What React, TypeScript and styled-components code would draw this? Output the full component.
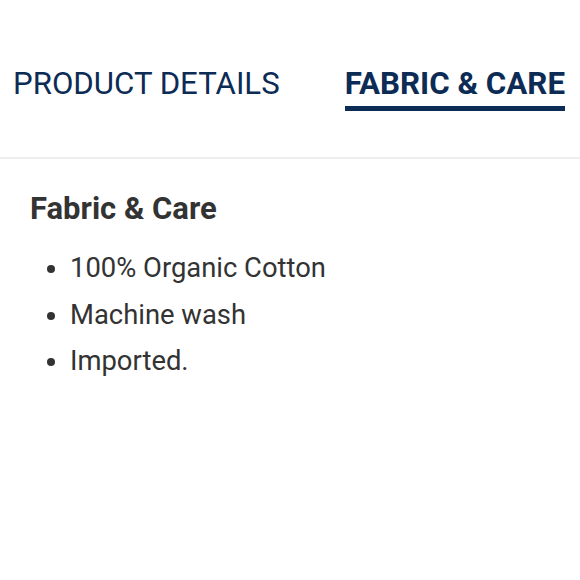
import React, { useState } from 'react'
import styled, { createGlobalStyle } from 'styled-components'

const GlobalStyle = createGlobalStyle`
  html, body {
    margin: 0;
    padding: 0;
    background: #fff;
    font-family: Roboto, "Liberation Sans", sans-serif;
  }
`

const Page = styled.div`
  width: 580px;
  overflow: hidden;
`

const TabBar = styled.div`
  display: flex;
  align-items: flex-start;
  gap: 65px;
  padding: 66px 0 0 13px;
  height: 159px;
  box-sizing: border-box;
  border-bottom: 2px solid #eeeeee;
`

const Tab = styled.button<{ $active?: boolean }>`
  padding: 0 0 4px;
  margin: 0;
  background: none;
  border: none;
  border-bottom: 5px solid ${p => (p.$active ? '#0c2b55' : 'transparent')};
  color: #0c2b55;
  font-family: inherit;
  font-size: ${p => (p.$active ? '31.3px' : '31.2px')};
  font-weight: ${p => (p.$active ? 700 : 400)};
  line-height: 36px;
  white-space: nowrap;
  cursor: pointer;
`

const Panel = styled.div`
  padding: 32px 30px 30px;
`

const Heading = styled.h2`
  margin: 0 0 18px;
  color: #333;
  font-size: 31px;
  font-weight: 700;
  line-height: 36px;
`

const List = styled.ul`
  margin: 0;
  padding-left: 40px;
  color: #333;
  font-size: 27.4px;
  line-height: 46.5px;
`

const tabs = ['PRODUCT DETAILS', 'FABRIC & CARE']

export default function App() {
  const [active, setActive] = useState(1)

  return (
    <Page>
      <GlobalStyle />
      <TabBar>
        {tabs.map((t, i) => (
          <Tab key={t} $active={i === active} onClick={() => setActive(i)}>
            {t}
          </Tab>
        ))}
      </TabBar>
      <Panel>
        <Heading>Fabric &amp; Care</Heading>
        <List>
          <li>100% Organic Cotton</li>
          <li>Machine wash</li>
          <li>Imported.</li>
        </List>
      </Panel>
    </Page>
  )
}
